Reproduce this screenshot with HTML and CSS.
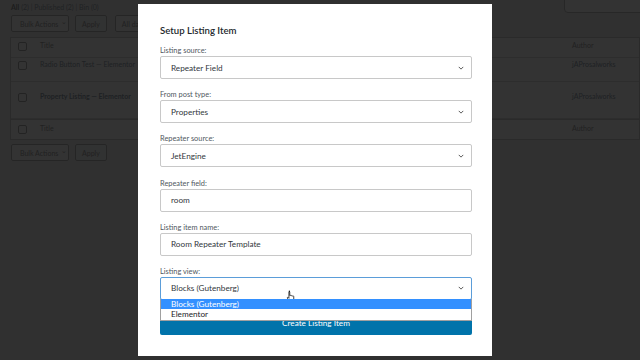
FILE: index.html
```html
<!DOCTYPE html>
<html lang="en">
<head>
    <meta charset="UTF-8">
    <meta name="viewport" content="width=device-width, initial-scale=1.0">
    <title>Listings</title>
    <link rel="stylesheet" href="styles.css">
</head>
<body>

<!-- 뒤쪽 목록 페이지 -->
<div class="wp-page">
    <div class="top-row">
        <div class="subsubsub"><b>All</b> (2) | Published (2) | Bin (0)</div>
        <div class="search-box"></div>
    </div>

    <div class="tablenav">
        <span class="wp-btn bulk">Bulk Actions <span class="caret">&#8964;</span></span>
        <span class="wp-btn">Apply</span>
        <span class="wp-btn dates">All dates</span>
    </div>

    <div class="list-table">
        <div class="row head">
            <span class="cb"></span><span class="col-title">Title</span><span class="col-author">Author</span>
        </div>
        <div class="row r1">
            <span class="cb"></span><span class="col-title link">Radio Button Test — Elementor</span><span class="col-author link">jAProsalworks</span>
        </div>
        <div class="row r2">
            <span class="cb"></span><span class="col-title link strong">Property Listing — Elementor</span><span class="col-author link">jAProsalworks</span>
        </div>
        <div class="row foot">
            <span class="cb"></span><span class="col-title">Title</span><span class="col-author">Author</span>
        </div>
    </div>

    <div class="tablenav">
        <span class="wp-btn bulk">Bulk Actions <span class="caret">&#8964;</span></span>
        <span class="wp-btn">Apply</span>
    </div>
</div>

<!-- 팝업 -->
<div class="overlay">
    <div class="modal">
        <h2 class="modal-title">Setup Listing Item</h2>

        <div class="field">
            <label>Listing source:</label>
            <div class="control select">Repeater Field <svg class="chevron" viewBox="0 0 8 5"><path d="M1 1l3 3 3-3"/></svg></div>
        </div>

        <div class="field">
            <label>From post type:</label>
            <div class="control select">Properties <svg class="chevron" viewBox="0 0 8 5"><path d="M1 1l3 3 3-3"/></svg></div>
        </div>

        <div class="field">
            <label>Repeater source:</label>
            <div class="control select">JetEngine <svg class="chevron" viewBox="0 0 8 5"><path d="M1 1l3 3 3-3"/></svg></div>
        </div>

        <div class="field">
            <label>Repeater field:</label>
            <div class="control">room</div>
        </div>

        <div class="field">
            <label>Listing item name:</label>
            <div class="control">Room Repeater Template</div>
        </div>

        <div class="field last">
            <label>Listing view:</label>
            <div class="control select focused">Blocks (Gutenberg) <svg class="chevron" viewBox="0 0 8 5"><path d="M1 1l3 3 3-3"/></svg>
                <svg class="cursor" viewBox="0 0 12 14"><path d="M3.5 1.2c.6 0 1 .4 1 1v4.2c.3-.3 1.4-.3 1.6.3.4-.4 1.4-.3 1.6.3.5-.4 1.6-.2 1.6.7v3c0 1.6-1 2.8-2.6 2.8H5.6c-.8 0-1.4-.4-1.900-1L1.6 9.6c-.4-.6.4-1.300 1-.8l.9.9V2.2c0-.6.4-1 1-1z"/></svg>
                <ul class="dropdown">
                    <li class="active">Blocks (Gutenberg)</li>
                    <li>Elementor</li>
                </ul>
            </div>
        </div>

        <button class="create-btn">Create Listing Item</button>
    </div>
</div>

</body>
</html>
```

FILE: styles.css
```css
body {
    margin: 0;
    padding: 0;
    font-family: Lato, "Noto Sans", sans-serif;
    font-size: 8px;
    color: #1d2327;
    overflow: hidden;
}

/* 뒤쪽 페이지 (오버레이 아래라서 흐리게) */
.wp-page {
    height: 100vh;
    background-color: #f0f0f1;
    padding-left: 10px;
    font-size: 7px;
    color: #a4a4a4;
    overflow: hidden;
}

.top-row {
    display: flex;
    justify-content: space-between;
    height: 13px;
}

.subsubsub {
    padding: 3px 0 0 1px;
    color: #a0a8b0;
}

.subsubsub b {
    color: #909090;
}

.search-box {
    width: 84px;
    height: 22px;
    margin: -11px -10px 0 0;
    border: 1px solid #c0c0c0;
    border-radius: 4px;
    background-color: #fff;
}

.tablenav {
    display: flex;
    gap: 6px;
    padding: 2px 0 0 1px;
    height: 22px;
}

.wp-btn {
    display: flex;
    align-items: center;
    height: 15px;
    padding: 0 6px;
    border: 1px solid #b8b8b8;
    border-radius: 2px;
    background-color: #f6f7f7;
    white-space: nowrap;
}

.wp-btn.bulk {
    width: 43px;
    padding: 0 5px 0 8px;
    background-color: #fff;
}

.wp-btn.dates {
    margin-left: 2px;
    width: 60px;
    background-color: #fff;
}

.caret {
    margin-left: 3px;
    line-height: 1;
    margin-top: -4px;
}

.list-table {
    border: 1px solid #d0d0d0;
    background-color: #fff;
    margin-bottom: 2px;
}

.row {
    display: flex;
    align-items: flex-start;
    border-bottom: 1px solid #e0e0e0;
}

.row.head { height: 16px; padding-top: 3px; }
.row.r1 { height: 21px; padding-top: 2px; }
.row.r2 { height: 26px; padding-top: 10px; }
.row.foot { height: 15px; padding-top: 4px; border-bottom: none; border-top: 1px solid #d0d0d0; }

.cb {
    width: 7px;
    height: 7px;
    margin: 1px 0 0 7px;
    border: 1px solid #b0b0b0;
    border-radius: 2px;
    background-color: #fff;
}

.col-title {
    margin-left: 13px;
    width: 532px;
}

.link {
    color: #98a4b0;
}

.strong {
    font-weight: 700;
}

/* 팝업 */
.overlay {
    position: fixed;
    top: 0;
    left: 0;
    width: 100%;
    height: 100%;
    background-color: rgba(0, 0, 0, 0.8);
    padding: 4px 0 0 138px;
    box-sizing: border-box;
}

.modal {
    width: 354px;
    height: 352px;
    box-sizing: border-box;
    background-color: #fff;
    padding: 20px 20px 0 22px;
}

.modal-title {
    margin: 0 0 7px;
    font-size: 9.6px;
    line-height: 14px;
    font-weight: 600;
    color: #23282d;
}

.field {
    margin-bottom: 10.2px;
}

.field.last {
    margin-bottom: 11px;
}

.field label {
    display: block;
    height: 11px;
    line-height: 11px;
    font-size: 7.4px;
    color: #50575e;
}

.control {
    position: relative;
    display: flex;
    align-items: center;
    height: 23px;
    box-sizing: border-box;
    padding: 0 10px;
    border: 1px solid #c8c8c8;
    border-radius: 2px;
    font-size: 8.2px;
    color: #32373c;
}

.select {
    justify-content: space-between;
}

.focused {
    border-color: #5b9dd9;
}

.chevron {
    width: 6px;
    height: 4px;
    margin-right: -3px;
    fill: none;
    stroke: #555;
    stroke-width: 1.3;
}

.cursor {
    position: absolute;
    left: 125px;
    top: 12px;
    width: 10px;
    height: 12px;
    fill: #fff;
    stroke: #000;
    stroke-width: 0.9;
}

.dropdown {
    position: absolute;
    top: 100%;
    left: -1px;
    right: -1px;
    margin: 0;
    padding: 0;
    list-style: none;
    background-color: #fff;
    border: 1px solid #a0a0a0;
    border-top: none;
    z-index: 2;
}

.dropdown li {
    height: 10.5px;
    line-height: 10.5px;
    padding-left: 10px;
    font-size: 8.2px;
    color: #1d2327;
}

.dropdown li.active {
    background-color: #3390ff;
    color: #fff;
}

.create-btn {
    display: block;
    width: 100%;
    height: 24px;
    border: none;
    border-radius: 2px;
    background-color: #0073aa;
    color: #fff;
    font-family: Lato, "Noto Sans", sans-serif;
    font-size: 8.2px;
    line-height: 24px;
    padding: 0;
}
```
